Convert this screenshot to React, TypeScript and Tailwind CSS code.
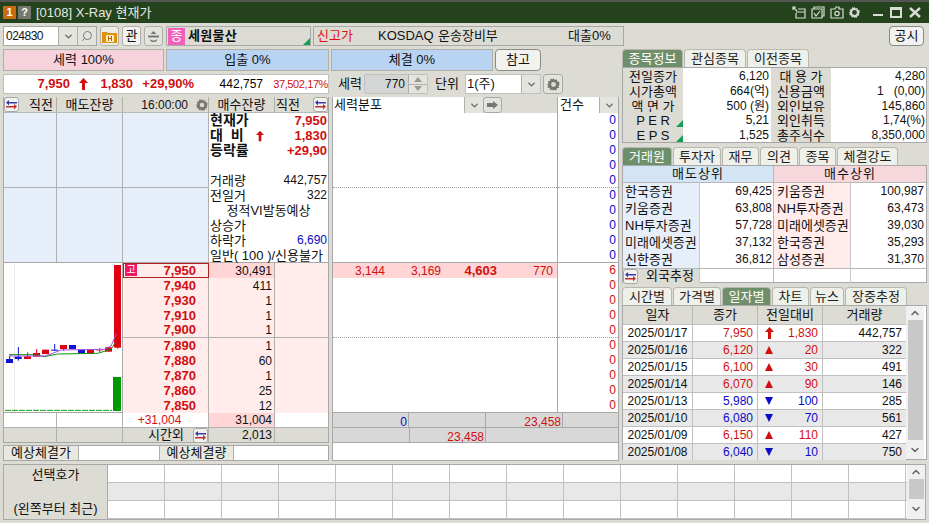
import { ChevronDown, ChevronUp, Search } from "lucide-react";

const askRows = [
  ["7,950", "30,491"],
  ["7,940", "411"],
  ["7,930", "1"],
  ["7,910", "1"],
  ["7,900", "1"],
  ["7,890", "1"],
  ["7,880", "60"],
  ["7,870", "1"],
  ["7,860", "25"],
  ["7,850", "12"],
];

const infoRows = [
  ["전일종가", "6,120", "대 용 가", "4,280"],
  ["시가총액", "664(억)", "신용금액", "1   (0,00)"],
  ["액 면 가", "500 (원)", "외인보유", "145,860"],
  ["P E R", "5,21", "외인취득", "1,74(%)"],
  ["E P S", "1,525", "총주식수", "8,350,000"],
];

const brokerRows = [
  ["한국증권", "69,425", "키움증권", "100,987"],
  ["키움증권", "63,808", "NH투자증권", "63,473"],
  ["NH투자증권", "57,728", "미래에셋증권", "39,030"],
  ["미래에셋증권", "37,132", "한국증권", "35,293"],
  ["신한증권", "36,812", "삼성증권", "31,370"],
];

const dailyRows = [
  { date: "2025/01/17", close: "7,950", kind: "limit", diff: "1,830", vol: "442,757" },
  { date: "2025/01/16", close: "6,120", kind: "up", diff: "20", vol: "322" },
  { date: "2025/01/15", close: "6,100", kind: "up", diff: "30", vol: "491" },
  { date: "2025/01/14", close: "6,070", kind: "up", diff: "90", vol: "146" },
  { date: "2025/01/13", close: "5,980", kind: "down", diff: "100", vol: "285" },
  { date: "2025/01/10", close: "6,080", kind: "down", diff: "70", vol: "561" },
  { date: "2025/01/09", close: "6,150", kind: "up", diff: "110", vol: "427" },
  { date: "2025/01/08", close: "6,040", kind: "down", diff: "10", vol: "750" },
];

// 캔들: 확대 좌표 기준 x, 몸통 위/아래, 꼬리 위/아래
const candles = [
  { x: 15, top: 297, bottom: 309, hi: 287, lo: 309, red: false },
  { x: 41, top: 290, bottom: 297, hi: 261, lo: 302, red: false },
  { x: 69, top: 289, bottom: 297, hi: 277, lo: 297, red: true },
  { x: 96, top: 279, bottom: 290, hi: 267, lo: 290, red: true },
  { x: 123, top: 269, bottom: 282, hi: 269, lo: 282, red: true },
  { x: 150, top: 269, bottom: 272, hi: 252, lo: 272, red: false },
  { x: 177, top: 255, bottom: 267, hi: 255, lo: 272, red: true },
  { x: 204, top: 255, bottom: 267, hi: 255, lo: 267, red: false },
  { x: 231, top: 269, bottom: 280, hi: 269, lo: 280, red: false },
  { x: 258, top: 269, bottom: 282, hi: 269, lo: 282, red: true },
  { x: 285, top: 269, bottom: 271, hi: 265, lo: 277, red: true },
  { x: 312, top: 262, bottom: 275, hi: 262, lo: 275, red: true },
  { x: 339, top: 15, bottom: 263, hi: 15, lo: 266, red: true },
];

function SwapIcon() {
  return (
    <span className="w-[15px] h-[15px] rounded-[3px] border border-[#a8a8a8] bg-[#f2f2ee] flex items-center justify-center shrink-0">
      <svg width="13" height="11" viewBox="0 0 13 11">
        <path d="M1 3.5L4 1v2h8v1.4H4v2z" fill="#3a3ab0" />
        <path d="M12 7.5L9 5v2H1v1.4h8v2z" fill="#c03030" />
      </svg>
    </span>
  );
}

function GearIcon({ size = 13 }: { size?: number }) {
  return (
    <svg width={size} height={size} viewBox="0 0 16 16">
      <path
        d="M8 1l1.2 2.2 2.4-.8.4 2.5 2.5.4-.8 2.4L15 8l-1.8 1.2.8 2.4-2.5.4-.4 2.5-2.4-.8L8 15l-1.2-1.7-2.4.8-.4-2.5-2.5-.4.8-2.4L1 8l1.8-1.2-.8-2.4 2.5-.4.4-2.5 2.4.8z"
        fill="#77776f"
      />
      <circle cx="8" cy="8" r="2.6" fill="#dcdcd5" />
    </svg>
  );
}

function UpArrow({ small }: { small?: boolean }) {
  return (
    <svg width={small ? 8 : 9} height="12" viewBox="0 0 9 12" className="shrink-0">
      <path d="M4.5 0L9 5H6v7H3V5H0z" fill="#d01010" />
    </svg>
  );
}

function Tri({ down }: { down?: boolean }) {
  return (
    <svg width="8" height="8" viewBox="0 0 8 8" className="shrink-0">
      {down ? <path d="M0 0h8L4 8z" fill="#0a0ac8" /> : <path d="M4 0l4 8H0z" fill="#d01010" />}
    </svg>
  );
}

function GreenCorner() {
  return (
    <svg width="7" height="7" viewBox="0 0 7 7" className="absolute right-0 bottom-0">
      <path d="M7 0v7H0z" fill="#10a050" />
    </svg>
  );
}

function Tab({ label, w, active }: { label: string; w: string; active?: boolean }) {
  return (
    <div
      className={
        w +
        " h-full rounded-t-[4px] border border-b-0 border-[#b8b8b0] flex items-center justify-center text-[13px] " +
        (active ? "bg-[#6f8f6a] text-white" : "bg-[#eef0ea] text-[#222]")
      }
    >
      {label}
    </div>
  );
}

function DropBtn({ w }: { w: string }) {
  return (
    <div className={w + " h-full bg-[#e4e4de] border-l border-[#b0b0a8] flex items-center justify-center shrink-0"}>
      <ChevronDown size={11} strokeWidth={3} className="text-[#666]" />
    </div>
  );
}

function ScrollBar({ thumb }: { thumb: string }) {
  return (
    <div className="w-[18px] bg-[#f0f0f0] flex flex-col items-center shrink-0">
      <ChevronUp size={12} strokeWidth={3} className="text-[#666] my-[1px]" />
      <div className={thumb + " w-[15px] bg-[#c8c8c8]"} />
      <ChevronDown size={12} strokeWidth={3} className="text-[#666] my-auto" />
    </div>
  );
}

function TitleBar() {
  return (
    <div className="h-[23px] border-t-2 border-[#555] bg-[#24431d] flex items-center pl-[3px] pr-[8px] text-[#e4e8e0] text-[13px]">
      <span className="w-[13px] h-[13px] bg-[#c86a10] text-white text-[11px] font-bold flex items-center justify-center">1</span>
      <span className="ml-[2px] w-[13px] h-[13px] bg-[#77776f] text-white text-[11px] font-bold flex items-center justify-center">?</span>
      <span className="ml-[5px]">[0108] X-Ray 현재가</span>
      <div className="ml-auto flex items-center">
        <svg width="14" height="13" viewBox="0 0 14 13" fill="none" stroke="#d8dcd4" strokeWidth="1.2">
          <path d="M1 1l4 4M1 4V1h3M6 3h7v9H4V7M4 6h9" />
        </svg>
        <svg className="ml-[5px]" width="14" height="13" viewBox="0 0 14 13" fill="none" stroke="#d8dcd4" strokeWidth="1.2">
          <path d="M3 3V1h10v9h-2M1 3h10v9H1zM3 7l2 3 4-5" />
        </svg>
        <svg className="ml-[5px]" width="14" height="13" viewBox="0 0 14 13" fill="none" stroke="#d8dcd4" strokeWidth="1.2">
          <path d="M1 3h4l1-2h3v2h4v9H1z" />
          <circle cx="7" cy="7.5" r="2.2" />
        </svg>
        <svg className="ml-[4px]" width="13" height="13" viewBox="0 0 16 16">
          <path
            d="M8 1l1.2 2.2 2.4-.8.4 2.5 2.5.4-.8 2.4L15 8l-1.8 1.2.8 2.4-2.5.4-.4 2.5-2.4-.8L8 15l-1.2-1.7-2.4.8-.4-2.5-2.5-.4.8-2.4L1 8l1.8-1.2-.8-2.4 2.5-.4.4-2.5 2.4.8z"
            fill="#d8dcd4"
          />
          <circle cx="8" cy="8" r="3" fill="#24431d" />
        </svg>
        <div className="ml-[12px] w-[10px] h-[2px] bg-[#d8dcd4] self-end mb-[3px]" />
        <div className="ml-[7px] w-[12px] h-[11px] border-2 border-t-[3px] border-[#d8dcd4]" />
        <svg className="ml-[7px]" width="12" height="11" viewBox="0 0 12 11" fill="none" stroke="#d8dcd4" strokeWidth="2.4">
          <path d="M1 1l10 9M11 1L1 10" />
        </svg>
      </div>
    </div>
  );
}

function TopRow() {
  return (
    <div className="mt-[3px] h-[20px] flex pl-[3px] pr-[5px]">
      <div className="w-[94px] h-full bg-white border border-[#a8a8a8] flex items-center shrink-0">
        <span className="pl-[2px] w-[55px] text-[12px] tracking-[-0.5px]">024830</span>
        <DropBtn w="w-[19px]" />
        <div className="w-[19px] h-full bg-[#e4e4de] border-l border-[#b0b0a8] flex items-center justify-center">
          <Search size={12} className="text-[#777] -scale-x-100" />
        </div>
      </div>
      <div className="ml-[3px] w-[19px] h-full bg-[#ecece6] border border-[#b0b0a8] rounded-[3px] flex items-center justify-center">
        <svg width="15" height="13" viewBox="0 0 15 13">
          <path d="M0 2h5l1 1h9v10H0z" fill="#e0900c" />
          <rect x="4" y="5" width="8" height="7" fill="#fff0c0" />
          <path d="M6 6v5h1V9h2v2h1V6H9v2H7V6z" fill="#c06000" />
        </svg>
      </div>
      <div className="ml-[3px] w-[19px] h-full bg-[#f2f2ee] border border-[#b0b0a8] rounded-[3px] flex items-center justify-center text-[13px]">관</div>
      <div className="ml-[3px] w-[19px] h-full bg-[#e4e4de] border border-[#b0b0a8] rounded-[3px] flex items-center justify-center">
        <svg width="13" height="13" viewBox="0 0 13 13" fill="#777">
          <path d="M6.5 1l3 3h-6zM1 5.5h11v2H1zM3 9c2 2 5 2 7 0v1.5c-2 2-5 2-7 0z" />
        </svg>
      </div>
      <div className="ml-[3px] w-[145px] h-full bg-[#dcdcd5] border border-[#a8a8a8] flex items-center relative">
        <span className="w-[17px] h-[17px] ml-[1px] bg-[#f060b8] text-white text-[13px] flex items-center justify-center">종</span>
        <span className="ml-[3px] text-[13px] font-bold tracking-[0.3px]">세원물산</span>
        <GreenCorner />
      </div>
      <div className="ml-[2px] w-[311px] h-full border border-[#a8a8a8] flex items-center text-[13px]">
        <span className="ml-[3px] w-[61px] text-[#e01010]">신고가</span>
        <span className="w-[60px]">KOSDAQ</span>
        <span className="w-[130px]">운송장비부</span>
        <span>대출0%</span>
      </div>
      <div className="ml-auto w-[35px] h-full bg-[#f2f2ee] border border-[#8a8a84] rounded-[4px] flex items-center justify-center text-[13px]">공시</div>
    </div>
  );
}

function PowerBars() {
  return (
    <div className="h-[22px] flex gap-[2px] text-[13px]">
      <div className="w-[161px] bg-[#f6d2dc] border border-[#b0b0a8] flex items-center justify-center">세력 100%</div>
      <div className="w-[163px] bg-[#b8d4f2] border border-[#b0b0a8] flex items-center justify-center">입출 0%</div>
      <div className="w-[162px] bg-[#b8d4f2] border border-[#b0b0a8] flex items-center justify-center">체결 0%</div>
      <div className="w-[46px] bg-[#f2f2ee] border border-[#8a8a84] rounded-[4px] flex items-center justify-center">참고</div>
    </div>
  );
}

function PriceRow() {
  return (
    <div className="mt-[3px] h-[20px] flex">
      <div className="w-[326px] bg-white border border-[#c0c0c0] flex items-center text-[13px] text-[#d01010] font-bold">
        <span className="w-[66px] text-right">7,950</span>
        <span className="w-[26px] flex justify-center"><UpArrow /></span>
        <span className="w-[37px] text-right">1,830</span>
        <span className="w-[61px] text-right">+29,90%</span>
        <span className="w-[69px] text-right font-normal text-[12px] text-black">442,757</span>
        <span className="w-[65px] text-right font-normal text-[11px] tracking-[-0.4px] whitespace-nowrap">37,502,17%</span>
      </div>
      <div className="ml-[9px] flex items-center text-[13px] h-full">
        <span className="w-[26px]">세력</span>
        <div className="w-[64px] h-[20px] bg-[#d4d6d6] border border-[#c0c0c0] flex items-center justify-end text-[12px] rounded-[2px]">
          <span className="pr-[3px]">770</span>
          <div className="w-[19px] h-full flex flex-col bg-[#e4e4de] border-l border-[#b0b0a8]">
            <div className="flex-1 border-b border-[#b0b0a8] flex items-center justify-center">
              <svg width="8" height="5"><path d="M4 0l4 5H0z" fill="#999" /></svg>
            </div>
            <div className="flex-1 flex items-center justify-center">
              <svg width="8" height="5"><path d="M0 0h8L4 5z" fill="#999" /></svg>
            </div>
          </div>
        </div>
        <span className="ml-[7px] w-[30px]">단위</span>
        <div className="w-[76px] h-[20px] bg-white border border-[#c0c0c0] flex items-center">
          <span className="pl-[1px] flex-1">1(주)</span>
          <DropBtn w="w-[19px]" />
        </div>
        <div className="ml-[2px] w-[20px] h-[20px] bg-[#e4e4de] border border-[#a8a8a8] rounded-[3px] flex items-center justify-center">
          <GearIcon size={15} />
        </div>
      </div>
    </div>
  );
}

function Chart() {
  return (
    <svg width="119" height="150" viewBox="9 9 357 450" className="block">
      <rect x="39" y="9" width="3" height="450" fill="#ececec" />
      {candles.map((c) => {
        const color = c.red ? "#e00010" : "#1010d0";
        return (
          <g key={c.x}>
            <rect x={c.x + 9.5} y={c.hi} width="3" height={c.lo - c.hi} fill={color} />
            <rect x={c.x} y={c.top} width="21" height={c.bottom - c.top} fill={color} />
          </g>
        );
      })}
      <polyline points="24,284 100,284 130,290 170,282 290,280 330,268 345,245" fill="none" stroke="#109010" strokeWidth="3" />
      <polyline points="24,288 130,288 150,282 180,270 310,268 330,258 347,220" fill="none" stroke="#a050e0" strokeWidth="3" />
      <line x1="12" y1="451" x2="333" y2="451" stroke="#10a010" strokeWidth="3" strokeDasharray="18 3" />
      <rect x="336" y="351" width="24" height="102" fill="#009a00" />
    </svg>
  );
}

function OrderBook() {
  return (
    <div className="w-[326px] border-x border-b border-[#a8a8a8] shrink-0 bg-white text-[12px]">
      <div className="h-[16px] flex bg-[#dcdcd5] border-b border-[#b8b8b8] items-center text-[13px]">
        <div className="w-[53px] h-full border-r border-[#b0b0a8] flex items-center">
          <SwapIcon />
          <span className="ml-[10px]">직전</span>
        </div>
        <div className="w-[66px] h-full border-r border-[#b0b0a8] flex items-center justify-center">매도잔량</div>
        <div className="w-[86px] h-full border-r border-[#b0b0a8] flex items-center justify-end text-[12px]">
          <span className="mr-[7px]">16:00:00</span>
          <span className="mr-[-1px]"><GearIcon size={14} /></span>
        </div>
        <div className="w-[66px] h-full border-r border-[#b0b0a8] flex items-center justify-center">매수잔량</div>
        <div className="w-[53px] h-full flex items-center">
          <span className="ml-[1px]">직전</span>
          <span className="ml-auto"><SwapIcon /></span>
        </div>
      </div>
      <div className="flex h-[150px] border-b border-[#a8a8a8]">
        <div className="w-[205px] grid grid-cols-[53px_66px_86px] grid-rows-2 bg-[#e6eefa]">
          {[0, 1, 2, 3, 4, 5].map((i) => (
            <div key={i} className={"border-r border-[#b0b0b0] " + (i < 3 ? "border-b" : "")} />
          ))}
        </div>
        <div className="flex-1 px-[1px] leading-[15px] text-[13px]">
          <div className="flex justify-between h-[15px] font-bold">
            <span className="text-[14px]">현재가</span>
            <span className="text-[#d01010]">7,950</span>
          </div>
          <div className="flex h-[15px] font-bold items-center">
            <span className="w-[35px] text-[14px] whitespace-pre">대  비</span>
            <span className="ml-[11px]"><UpArrow small /></span>
            <span className="ml-auto text-[#d01010]">1,830</span>
          </div>
          <div className="flex justify-between h-[15px] font-bold">
            <span className="text-[14px]">등락률</span>
            <span className="text-[#d01010]">+29,90</span>
          </div>
          <div className="h-[15px]" />
          <div className="flex justify-between h-[15px]">
            <span>거래량</span>
            <span className="text-[12px]">442,757</span>
          </div>
          <div className="flex justify-between h-[15px]">
            <span>전일거</span>
            <span className="text-[12px]">322</span>
          </div>
          <div className="h-[15px] text-center">정적VI발동예상</div>
          <div className="h-[15px]">상승가</div>
          <div className="flex justify-between h-[15px]">
            <span>하락가</span>
            <span className="text-[12px] text-[#0a0ac8]">6,690</span>
          </div>
          <div className="h-[15px] whitespace-pre">일반( 100 )/신용불가</div>
        </div>
      </div>
      <div className="flex h-[150px] border-b border-[#a8a8a8]">
        <div className="w-[119px] border-r border-[#a8a8a8] overflow-hidden">
          <Chart />
        </div>
        <div className="flex-1">
          {askRows.map(([price, qty], i) => (
            <div
              key={price}
              className={"flex h-[15px] bg-[#ffeceb] " + (i === 4 ? "border-b border-[#b0b0b0]" : "")}
            >
              <div
                className={
                  "w-[86px] border-r border-[#b0b0b0] flex items-center justify-end pr-[12px] text-[13px] font-bold text-[#d01010] relative " +
                  (i === 0 ? "border border-[#b02020]" : "")
                }
              >
                {i === 0 && (
                  <span className="absolute left-[1px] top-[0px] w-[12px] h-[12px] bg-[#f01860] text-white text-[10px] font-normal leading-[12px] text-center">
                    고
                  </span>
                )}
                {price}
              </div>
              <div
                className={
                  "w-[66px] border-r border-[#b0b0b0] flex items-center justify-end pr-[2px] " +
                  (i === 0 ? "bg-[#ffd5d5]" : "")
                }
              >
                {qty}
              </div>
              <div className="flex-1" />
            </div>
          ))}
        </div>
      </div>
      <div className="flex h-[15px] border-b border-[#b0b0b0]">
        <div className="w-[53px] border-r border-[#b0b0b0]" />
        <div className="w-[66px] border-r border-[#b0b0b0]" />
        <div className="w-[86px] border-r border-[#b0b0b0] flex items-center justify-center pr-[12px] text-[#d01010]">+31,004</div>
        <div className="w-[66px] border-r border-[#b0b0b0] bg-[#ffd5d5] flex items-center justify-end pr-[2px]">31,004</div>
        <div className="flex-1" />
      </div>
      <div className="flex h-[14px] bg-[#dcdcd5]">
        <div className="w-[53px] border-r border-[#b0b0b0]" />
        <div className="w-[66px] border-r border-[#b0b0b0]" />
        <div className="w-[86px] border-r border-[#b0b0b0] flex items-center text-[13px]">
          <span className="ml-[25px]">시간외</span>
          <span className="ml-auto"><SwapIcon /></span>
        </div>
        <div className="w-[66px] border-r border-[#b0b0b0] flex items-center justify-end pr-[2px]">2,013</div>
        <div className="flex-1" />
      </div>
    </div>
  );
}

function ForceTable() {
  const upper = [0, 1, 2, 3, 4, 5, 6, 7, 8, 9];
  return (
    <div className="ml-[3px] w-[287px] h-[364px] border border-t-0 border-[#a8a8a8] bg-white text-[12px] flex flex-col shrink-0">
      <div className="h-[16px] flex bg-[#dcdcd5] items-center shrink-0 text-[13px]">
        <div className="w-[131px] h-full bg-white pl-[1px] flex items-center">세력분포</div>
        <DropBtn w="w-[19px]" />
        <div className="w-[19px] h-full bg-[#e4e4de] border border-[#a8a8a8] rounded-[3px] flex items-center justify-center">
          <svg width="11" height="8"><path d="M0 2h6V0l5 4-5 4V6H0z" fill="#777" /></svg>
        </div>
        <div className="flex-1" />
        <div className="w-[42px] h-full bg-white border-l border-[#a8a8a8] pl-[2px] flex items-center">건수</div>
        <DropBtn w="w-[19px]" />
      </div>
      <div className="flex h-[150px] border-b border-[#a8a8a8] shrink-0">
        <div className="w-[225px] border-r border-[#a8a8a8] flex flex-col">
          <div className="h-[75px] border-b border-dotted border-[#a0a0a0]" />
        </div>
        <div className="flex-1 text-right pr-[2px] text-[#0a0ac8] leading-[15px]">
          {upper.map((i) => (
            <div key={i} className={"h-[15px] " + (i === 4 ? "border-b border-dotted border-[#a0a0a0] -mr-[2px] pr-[2px]" : "")}>0</div>
          ))}
        </div>
      </div>
      <div className="flex h-[150px] border-b border-[#a8a8a8] shrink-0">
        <div className="w-[225px] border-r border-[#a8a8a8]">
          <div className="h-[15px] bg-[#ffd5d5] flex items-center text-[#d01010]">
            <span className="w-[52px] text-right">3,144</span>
            <span className="w-[56px] text-right">3,169</span>
            <span className="w-[56px] text-right font-bold text-[13px]">4,603</span>
            <span className="w-[56px] text-right">770</span>
          </div>
          <div className="h-[60px] border-b border-dotted border-[#a0a0a0]" />
        </div>
        <div className="flex-1 text-right pr-[2px] text-[#d01010] leading-[15px]">
          {["6", "0", "0", "0", "0", "0", "0", "0", "0", "0"].map((v, i) => (
            <div key={i} className={"h-[15px] " + (i === 4 ? "border-b border-dotted border-[#a0a0a0] -mr-[2px] pr-[2px]" : "")}>{v}</div>
          ))}
        </div>
      </div>
      <div className="flex h-[15px] bg-[#d8d8d8] border-b border-[#a8a8a8] shrink-0">
        <div className="w-[76px] border-r border-[#a8a8a8] text-right pr-[1px] text-[#0a0ac8]">0</div>
        <div className="w-[77px] border-r border-[#a8a8a8]" />
        <div className="w-[77px] border-r border-[#a8a8a8] text-right pr-[1px] text-[#d01010]">23,458</div>
        <div className="flex-1" />
      </div>
      <div className="flex h-[15px] bg-[#d8d8d8] border-b border-[#a8a8a8] shrink-0">
        <div className="w-[77px] border-r border-[#a8a8a8]" />
        <div className="w-[76px] border-r border-[#a8a8a8] text-right pr-[1px] text-[#d01010]">23,458</div>
        <div className="flex-1" />
      </div>
    </div>
  );
}

function ExpectRow() {
  return (
    <div className="mt-[-16px] w-[326px] h-[16px] border border-[#a8a8a8] bg-white flex text-[13px] relative">
      <div className="w-[75px] bg-[#e8e8e0] border-r border-[#b0b0a8] flex items-center justify-center">예상체결가</div>
      <div className="w-[80px]" />
      <div className="w-[75px] bg-[#e8e8e0] border-x border-[#b0b0a8] flex items-center justify-center">예상체결량</div>
    </div>
  );
}

function InfoPanel() {
  return (
    <div className="h-[76px] border border-[#a8a8a8] bg-white mr-[2px]">
      {infoRows.map((r, i) => (
        <div key={r[0]} className="flex h-[14.8px] leading-[17px] text-[12px]">
          <div className="w-[60px] bg-[#dcdcd5] text-center text-[13px] whitespace-pre relative">
            {r[0]}
            {i > 2 && <GreenCorner />}
          </div>
          <div className="w-[88px] text-right pr-[2px] whitespace-pre">{r[1]}</div>
          <div className="w-[60px] bg-[#dcdcd5] text-center text-[13px] whitespace-pre">{r[2]}</div>
          <div className="flex-1 text-right whitespace-pre pr-[1px]">{r[3]}</div>
        </div>
      ))}
    </div>
  );
}

function BrokerPanel() {
  return (
    <div className="h-[118px] border border-[#a8a8a8] bg-white mr-[2px] text-[12px]">
      <div className="flex h-[17px] border-b border-[#b8b8b8] text-[13px]">
        <div className="w-[151px] bg-[#d3e5f5] border-r border-[#b8b8b8] flex items-center justify-center tracking-[1px]">매도상위</div>
        <div className="flex-1 bg-[#f6d8dc] flex items-center justify-center tracking-[1px]">매수상위</div>
      </div>
      {brokerRows.map((r) => (
        <div key={r[0]} className="flex h-[17px] leading-[17px]">
          <div className="w-[77px] bg-[#e6eefa] border-r border-[#c8c8c8] pl-[2px] whitespace-nowrap text-[13px]">{r[0]}</div>
          <div className="w-[74px] text-right pr-[1px] border-r border-[#b8b8b8]">{r[1]}</div>
          <div className="w-[77px] bg-[#ffeceb] border-r border-[#c8c8c8] pl-[3px] whitespace-nowrap text-[13px]">{r[2]}</div>
          <div className="flex-1 text-right pr-[2px]">{r[3]}</div>
        </div>
      ))}
      <div className="flex h-[15px] border-t border-[#b8b8b8]">
        <div className="w-[77px] bg-[#dcdcd5] border-r border-[#c8c8c8] flex items-center text-[13px]">
          <SwapIcon />
          <span className="ml-[8px] whitespace-nowrap">외국추정</span>
        </div>
        <div className="w-[74px] border-r border-[#b8b8b8]" />
        <div className="w-[77px] border-r border-[#c8c8c8]" />
      </div>
    </div>
  );
}

function DailyPanel() {
  return (
    <div className="h-[155px] border border-[#a8a8a8] bg-white mr-[2px] flex text-[12px]">
      <div className="w-[283px] shrink-0">
        <div className="flex h-[18px] bg-[#dcdcd5] text-[13px]">
          <div className="w-[70px] border-r border-[#b8b8b8] flex items-center justify-center">일자</div>
          <div className="w-[65px] border-r border-[#b8b8b8] flex items-center justify-center">종가</div>
          <div className="w-[65px] border-r border-[#b8b8b8] flex items-center justify-center">전일대비</div>
          <div className="flex-1 flex items-center justify-center">거래량</div>
        </div>
        {dailyRows.map((r, i) => {
          const red = r.kind !== "down";
          const color = red ? "text-[#d01010]" : "text-[#0a0ac8]";
          return (
            <div
              key={r.date}
              className={"flex h-[17px] border-t border-[#c0c0c0] leading-[16px] " + (i % 2 ? "bg-[#e8e8e8]" : "bg-white")}
            >
              <div className="w-[70px] border-r border-[#c0c0c0] text-center">{r.date}</div>
              <div className={"w-[65px] border-r border-[#c0c0c0] text-right pr-[4px] " + color}>{r.close}</div>
              <div className={"w-[65px] border-r border-[#c0c0c0] flex items-center pl-[7px] pr-[4px] " + color}>
                {r.kind === "limit" ? <UpArrow /> : <Tri down={r.kind === "down"} />}
                <span className="ml-auto">{r.diff}</span>
              </div>
              <div className="flex-1 text-right pr-[4px]">{r.vol}</div>
            </div>
          );
        })}
      </div>
      <ScrollBar thumb="h-[120px]" />
    </div>
  );
}

function RecentPanel() {
  const rows = ["bg-white", "bg-[#e8e8e8]", "bg-white"];
  const cols = [0, 1, 2, 3, 4, 5, 6, 7, 8, 9, 10, 11, 12, 13];
  return (
    <div className="mt-[3px] mr-[3px] h-[56px] border border-[#a8a8a8] flex text-[13px]">
      <div className="w-[104px] bg-[#dcdcd5] border-r border-[#a8a8a8] flex flex-col items-center shrink-0 py-[1px]">
        <span className="h-[18px] leading-[18px]">선택호가</span>
        <span className="mt-auto h-[18px] leading-[18px]">(왼쪽부터 최근)</span>
      </div>
      <div className="flex-1 min-w-0">
        {rows.map((bg, r) => (
          <div key={r} className={"flex h-[18px] border-b border-[#c0c0c0] " + bg}>
            {cols.map((c) => (
              <div key={c} className="w-[57px] border-r border-[#c0c0c0]" />
            ))}
          </div>
        ))}
      </div>
      <ScrollBar thumb="h-[20px]" />
    </div>
  );
}

export default function App() {
  return (
    <div className="w-[929px] h-[523px] overflow-hidden bg-[#dcdcd5] text-[#111] [font-family:'Liberation_Sans','Noto_Sans_CJK_KR',sans-serif]">
      <TitleBar />
      <TopRow />
      <div className="mt-[3px] pl-[3px] flex">
        <div className="w-[619px] shrink-0">
          <PowerBars />
          <PriceRow />
          <div className="mt-[3px] flex items-start">
            <OrderBook />
            <ForceTable />
          </div>
          <ExpectRow />
        </div>
        <div className="flex-1 min-w-0">
          <div className="h-[18px] flex gap-[1px]">
            <Tab label="종목정보" w="w-[61px]" active />
            <Tab label="관심종목" w="w-[62px]" />
            <Tab label="이전종목" w="w-[62px]" />
          </div>
          <InfoPanel />
          <div className="mt-[4px] h-[18px] flex gap-[1px]">
            <Tab label="거래원" w="w-[50px]" active />
            <Tab label="투자자" w="w-[48px]" />
            <Tab label="재무" w="w-[37px]" />
            <Tab label="의견" w="w-[38px]" />
            <Tab label="종목" w="w-[37px]" />
            <Tab label="체결강도" w="w-[61px]" />
          </div>
          <BrokerPanel />
          <div className="mt-[4px] h-[18px] flex gap-[1px]">
            <Tab label="시간별" w="w-[50px]" />
            <Tab label="가격별" w="w-[48px]" />
            <Tab label="일자별" w="w-[49px]" active />
            <Tab label="차트" w="w-[37px]" />
            <Tab label="뉴스" w="w-[34px]" />
            <Tab label="장중추정" w="w-[62px]" />
          </div>
          <DailyPanel />
        </div>
      </div>
      <div className="pl-[3px]">
        <RecentPanel />
      </div>
    </div>
  );
}
